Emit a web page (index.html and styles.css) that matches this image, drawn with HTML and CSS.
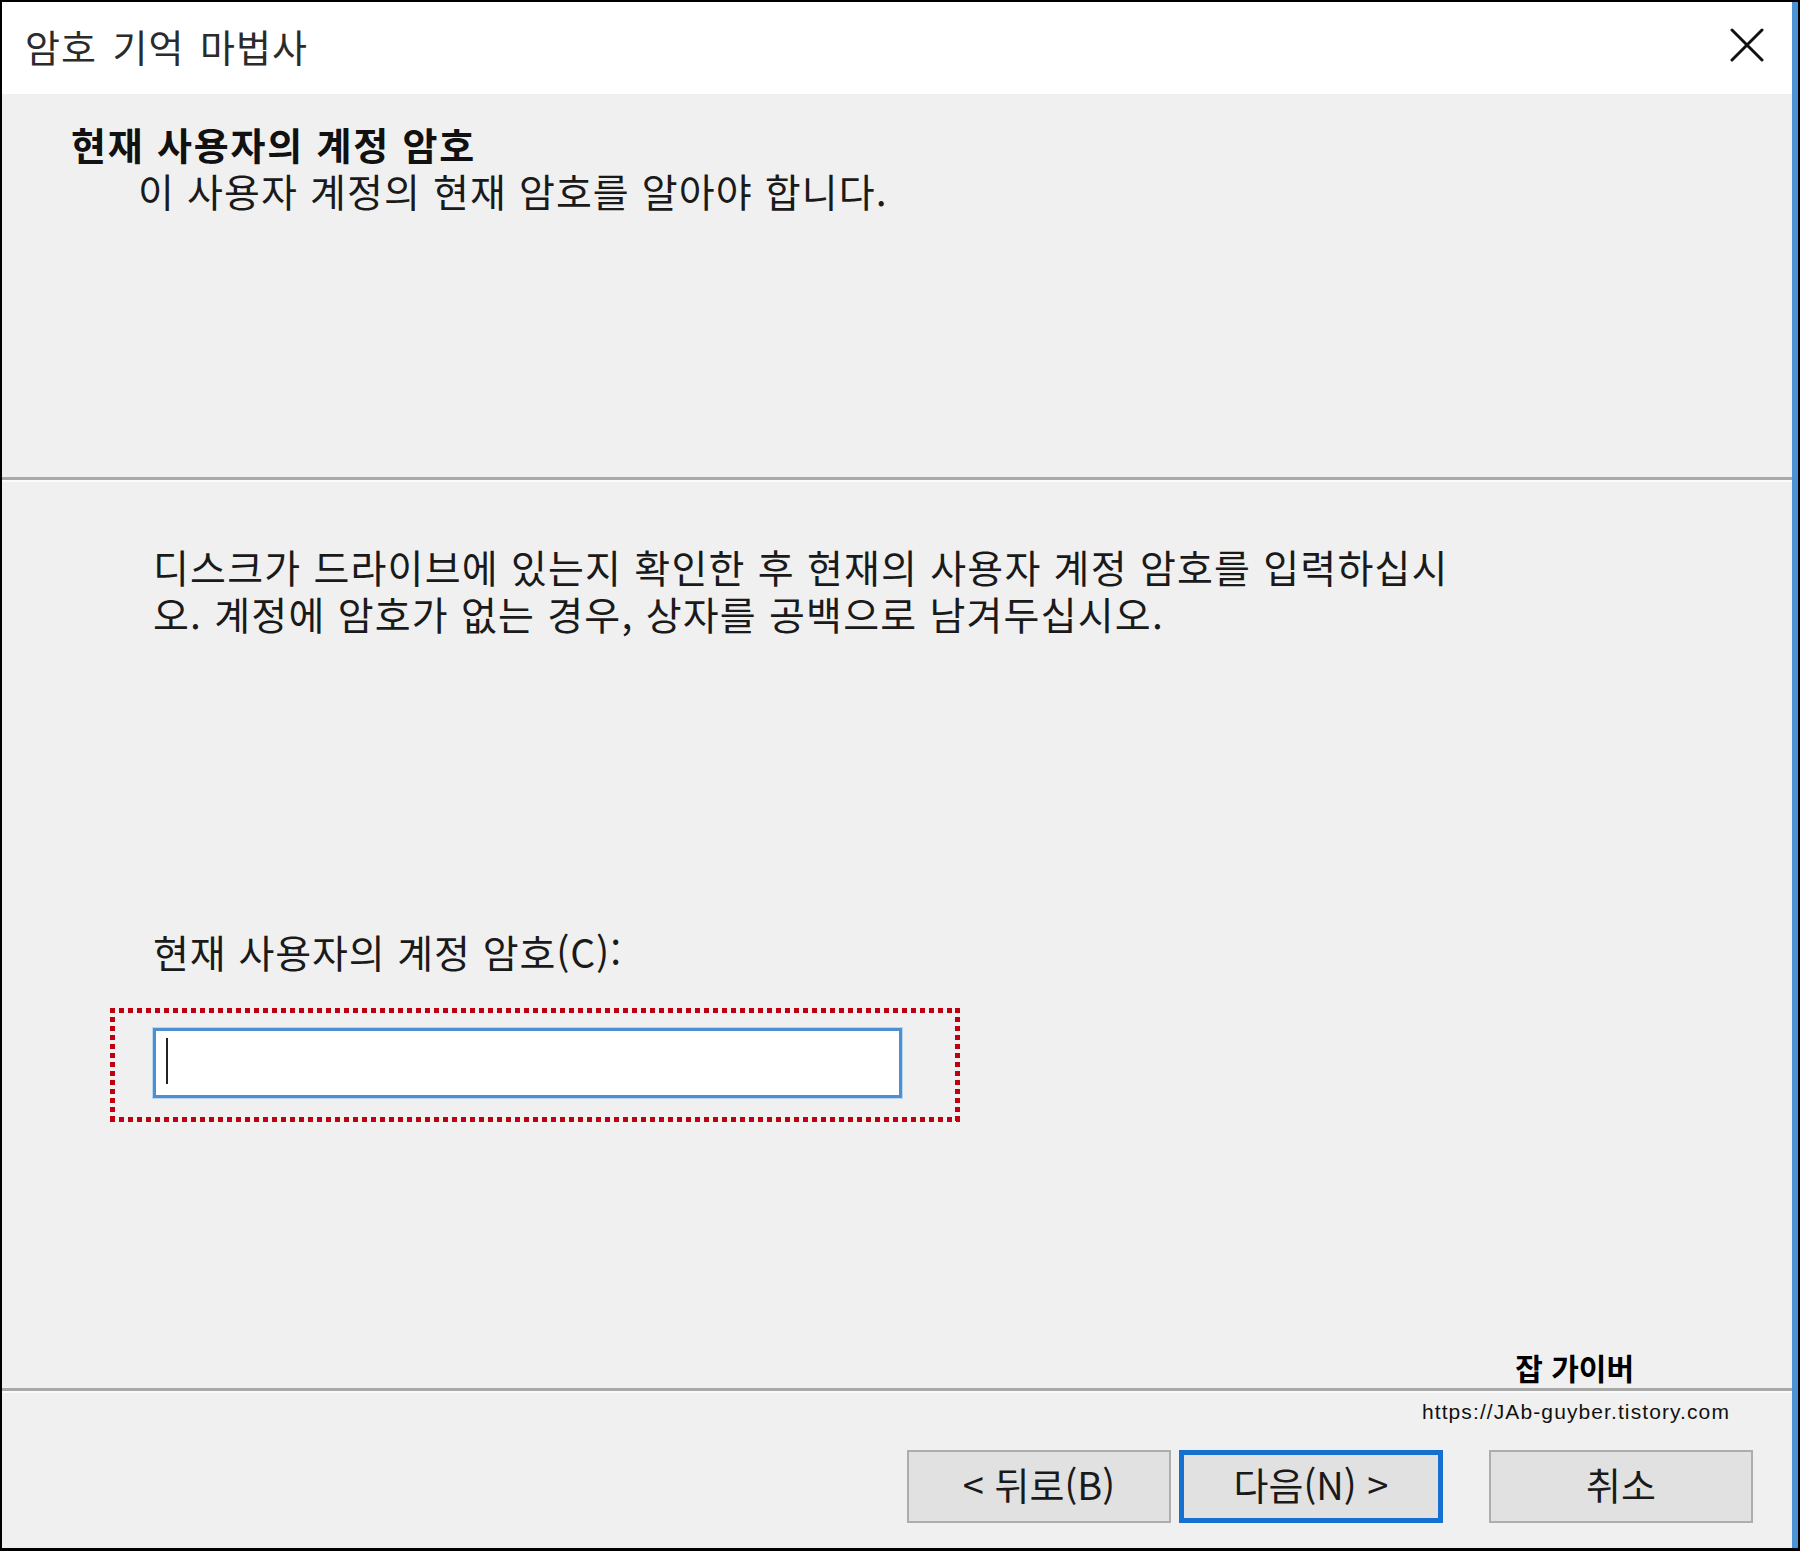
FILE: index.html
```html
<!DOCTYPE html>
<html lang="ko">
<head>
  <meta charset="UTF-8">
  <title>암호 기억 마법사</title>
  <link rel="stylesheet" href="styles.css">
</head>
<body>
  <div class="window">
    <!-- 제목 표시줄 -->
    <div class="titlebar">
      <span class="title">암호 기억 마법사</span>
      <svg class="close" viewBox="0 0 34 34" width="34" height="34">
        <path d="M2 2 L32 32 M32 2 L2 32" stroke="#111" stroke-width="3" stroke-linecap="round"/>
      </svg>
    </div>

    <div class="header">
      <h1>현재 사용자의 계정 암호</h1>
      <p>이 사용자 계정의 현재 암호를 알아야 합니다.</p>
    </div>
    <div class="sep"></div>

    <div class="content">
      <p class="desc">디스크가 드라이브에 있는지 확인한 후 현재의 사용자 계정 암호를 입력하십시<br>오. 계정에 암호가 없는 경우, 상자를 공백으로 남겨두십시오.</p>
      <label class="label">현재 사용자의 계정 암호(C):</label>
      <div class="mark">
        <div class="textbox"><span class="caret"></span></div>
      </div>
    </div>

    <div class="footer">
      <div class="brand">잡 가이버</div>
      <div class="sep"></div>
      <div class="url">https://JAb-guyber.tistory.com</div>
      <div class="buttons">
        <button class="btn">&lt; 뒤로(B)</button>
        <button class="btn default">다음(N) &gt;</button>
        <button class="btn cancel">취소</button>
      </div>
    </div>
  </div>
</body>
</html>
```

FILE: styles.css
```css
* { box-sizing: border-box; margin: 0; padding: 0; }
body {
  background: #000;
  padding: 2px 2px 3px 2px;
  font-family: "Noto Sans CJK KR", "Noto Sans", sans-serif;
  color: #1a1a1a;
}
.window {
  height: 1546px;
  background: #f0f0f0;
  border-right: 6px solid #4d92d4;
  display: flex; flex-direction: column;
}

/* 제목 표시줄 */
.titlebar {
  height: 92px; background: #fff;
  display: flex; align-items: center; justify-content: space-between;
  padding: 0 28px 6px 23px;
}
.title { font-size: 38px; color: #2b2b2b; word-spacing: 4px; letter-spacing: 1px; }
.close { display: block; }

.header { height: 383px; padding: 27px 0 0 69px; }
.header h1 { font-size: 38px; font-weight: 700; line-height: 46px; color: #111; letter-spacing: 1.8px; }
.header p { font-size: 39px; line-height: 46px; padding-left: 67px; letter-spacing: 1.1px; }

.sep { height: 5px; border-top: 3px solid #a9a9a9; border-bottom: 2px solid #fbfbfb; }

.content { flex: 1; padding: 61px 0 0 151px; }
.desc { font-size: 39px; line-height: 47px; letter-spacing: 1.2px; }
.label { display: block; font-size: 39px; line-height: 47px; margin-top: 291px; letter-spacing: 0.9px; }

/* 빨간 점선 강조 상자 */
.mark {
  width: 850px; height: 114px;
  margin: 33px 0 0 -43px;
  padding: 20px 0 0 43px;
  background:
    linear-gradient(90deg, #bf0010 5px, transparent 0) top left / 9px 5px repeat-x,
    linear-gradient(90deg, #bf0010 5px, transparent 0) bottom left / 9px 5px repeat-x,
    linear-gradient(#bf0010 5px, transparent 0) top left / 5px 9px repeat-y,
    linear-gradient(#bf0010 5px, transparent 0) top right / 5px 9px repeat-y;
}
.textbox {
  width: 749px; height: 70px;
  background: #fff;
  border: 3px solid #4d8fd3;
  box-shadow: 0 0 0 1px #bcd6f0;
  padding: 7px 0 0 10px;
}
.caret { display: block; width: 2px; height: 46px; background: #222; }

.footer { display: flex; flex-direction: column; }
.brand {
  font-size: 30px; font-weight: 700; line-height: 34px;
  text-align: right; padding-right: 158px; margin-bottom: 4px; color: #000;
}
.url {
  font-family: "Liberation Sans", Arial, sans-serif;
  font-size: 21px; line-height: 28px; color: #111; letter-spacing: 1.1px;
  text-align: right; padding-right: 62px; margin-top: 5px;
}
.buttons {
  display: flex; justify-content: flex-end;
  padding: 24px 39px 25px 0;
}
.btn {
  width: 264px; height: 73px;
  background: #e1e1e1; border: 2px solid #adadad;
  font-family: "Noto Sans CJK KR", sans-serif;
  font-size: 38px; color: #1a1a1a; padding-bottom: 6px;
}
.btn.default { border: 5px solid #1670cf; margin-left: 8px; }
.btn.cancel { margin-left: 46px; }
```
